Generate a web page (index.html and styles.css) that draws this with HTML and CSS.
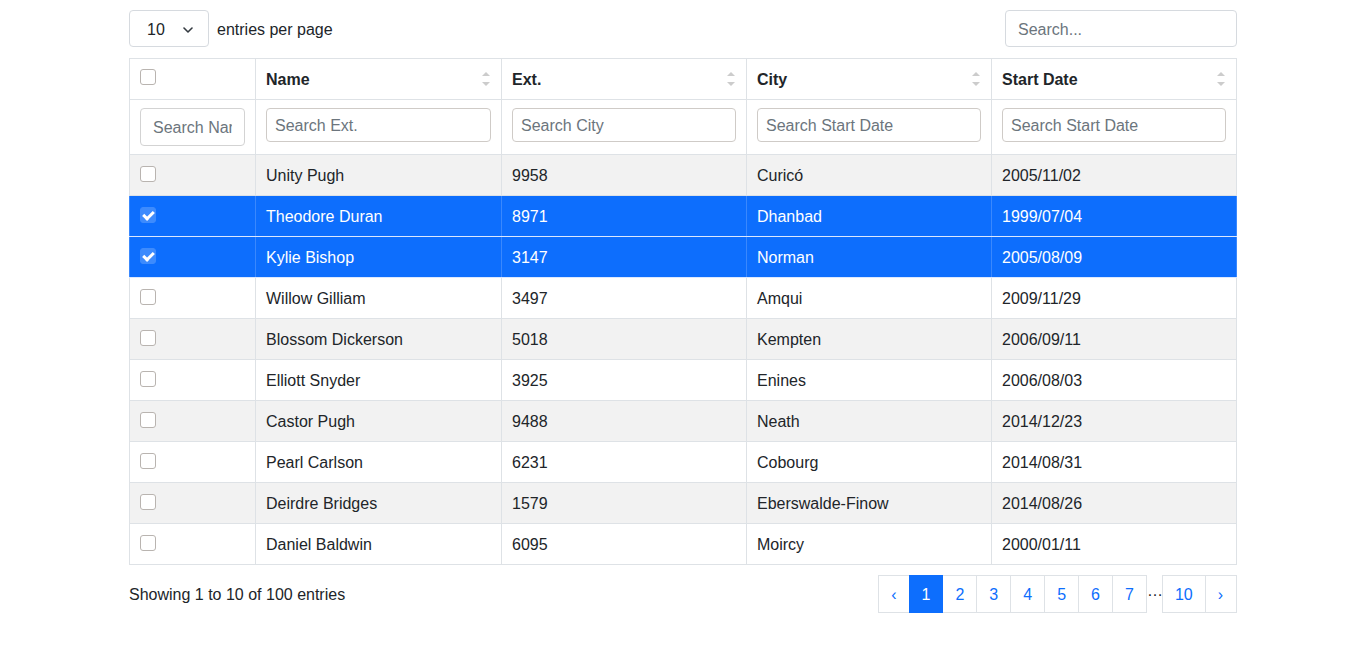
FILE: index.html
```html
<!DOCTYPE html>
<html>
<head>
<meta charset="utf-8">
<link rel="stylesheet" href="styles.css">
</head>
<body>
<div class="wrap">
  <div class="top">
    <div class="per">
      <div class="sel">
        <select class="selbox"><option>10</option></select>
        <svg class="chev" width="10" height="6" viewBox="0 0 10 6"><path d="M1 1l4 4 4-4" fill="none" stroke="#343a40" stroke-width="1.6" stroke-linecap="round" stroke-linejoin="round"/></svg>
      </div>
      <span class="perlabel">entries per page</span>
    </div>
    <input class="search" placeholder="Search...">
  </div>
  <table class="dt">
    <colgroup><col class="c0"><col class="c1"><col class="c2"><col class="c3"><col class="c4"></colgroup>
    <thead>
      <tr class="head">
        <th><input type="checkbox" class="cb"></th>
        <th><div class="th"><span>Name</span><svg class="sort" width="8" height="16" viewBox="0 0 8 16"><path d="M0 5L4 1L8 5Z M0 11L4 15L8 11Z" fill="#ccc"/></svg></div></th>
        <th><div class="th"><span>Ext.</span><svg class="sort" width="8" height="16" viewBox="0 0 8 16"><path d="M0 5L4 1L8 5Z M0 11L4 15L8 11Z" fill="#ccc"/></svg></div></th>
        <th><div class="th"><span>City</span><svg class="sort" width="8" height="16" viewBox="0 0 8 16"><path d="M0 5L4 1L8 5Z M0 11L4 15L8 11Z" fill="#ccc"/></svg></div></th>
        <th><div class="th"><span>Start Date</span><svg class="sort" width="8" height="16" viewBox="0 0 8 16"><path d="M0 5L4 1L8 5Z M0 11L4 15L8 11Z" fill="#ccc"/></svg></div></th>
      </tr>
      <tr class="filter">
        <th><input class="fbig" placeholder="Search Name"></th>
        <th><input class="f" placeholder="Search Ext."></th>
        <th><input class="f" placeholder="Search City"></th>
        <th><input class="f" placeholder="Search Start Date"></th>
        <th><input class="f" placeholder="Search Start Date"></th>
      </tr>
    </thead>
    <tbody>
      <tr class="odd"><td><input type="checkbox" class="cb"></td><td>Unity Pugh</td><td>9958</td><td>Curicó</td><td>2005/11/02</td></tr>
      <tr class="sel-row"><td><input type="checkbox" class="cb" checked></td><td>Theodore Duran</td><td>8971</td><td>Dhanbad</td><td>1999/07/04</td></tr>
      <tr class="sel-row"><td><input type="checkbox" class="cb" checked></td><td>Kylie Bishop</td><td>3147</td><td>Norman</td><td>2005/08/09</td></tr>
      <tr><td><input type="checkbox" class="cb"></td><td>Willow Gilliam</td><td>3497</td><td>Amqui</td><td>2009/11/29</td></tr>
      <tr class="odd"><td><input type="checkbox" class="cb"></td><td>Blossom Dickerson</td><td>5018</td><td>Kempten</td><td>2006/09/11</td></tr>
      <tr><td><input type="checkbox" class="cb"></td><td>Elliott Snyder</td><td>3925</td><td>Enines</td><td>2006/08/03</td></tr>
      <tr class="odd"><td><input type="checkbox" class="cb"></td><td>Castor Pugh</td><td>9488</td><td>Neath</td><td>2014/12/23</td></tr>
      <tr><td><input type="checkbox" class="cb"></td><td>Pearl Carlson</td><td>6231</td><td>Cobourg</td><td>2014/08/31</td></tr>
      <tr class="odd"><td><input type="checkbox" class="cb"></td><td>Deirdre Bridges</td><td>1579</td><td>Eberswalde-Finow</td><td>2014/08/26</td></tr>
      <tr><td><input type="checkbox" class="cb"></td><td>Daniel Baldwin</td><td>6095</td><td>Moircy</td><td>2000/01/11</td></tr>
    </tbody>
  </table>
  <div class="bottom">
    <div class="info">Showing 1 to 10 of 100 entries</div>
    <nav class="pager">
      <a class="pg">‹</a>
      <a class="pg active">1</a>
      <a class="pg">2</a>
      <a class="pg">3</a>
      <a class="pg">4</a>
      <a class="pg">5</a>
      <a class="pg">6</a>
      <a class="pg">7</a>
      <span class="ell">…</span>
      <a class="pg">10</a>
      <a class="pg last">›</a>
    </nav>
  </div>
</div>
</body>
</html>
```
FILE: styles.css
```css
* { box-sizing: border-box; }
html, body { margin: 0; padding: 0; background: #fff; }
body {
  font-family: "Liberation Sans", Arial, sans-serif;
  font-size: 16px;
  line-height: 24px;
  color: #212529;
}
.wrap {
  width: 1108px;
  margin: 0 auto;
  padding-top: 10px;
}
.top {
  display: flex;
  justify-content: space-between;
  align-items: center;
  height: 37px;
  margin-bottom: 11px;
}
.per { display: flex; align-items: center; gap: 8px; }
.perlabel { padding-top: 2px; }
.sel { position: relative; width: 80px; height: 37px; }
.selbox {
  appearance: none;
  -webkit-appearance: none;
  width: 80px;
  height: 37px;
  border: 1px solid #d6dadf;
  border-radius: 4px;
  background: #fff;
  font-family: inherit;
  font-size: 16px;
  color: #212529;
  padding: 2px 0 0 17px;
}
.chev { position: absolute; left: 54px; top: 17px; pointer-events: none; }
.search {
  width: 232px;
  height: 37px;
  border: 1px solid #d6dadf;
  border-radius: 4px;
  padding: 2px 12px 0;
  font-family: inherit;
  font-size: 16px;
  color: #212529;
}
.search::placeholder, .f::placeholder, .fbig::placeholder { color: #6c757d; }

.dt {
  width: 1108px;
  border-collapse: collapse;
  table-layout: fixed;
}
.c0 { width: 126px; }
.c1 { width: 246px; }
.c2 { width: 245px; }
.c3 { width: 245px; }
.c4 { width: 245px; }
.dt th, .dt td {
  border: 1px solid #dee2e6;
  padding: 9px 10px 7px;
  text-align: left;
  vertical-align: top;
  height: 41px;
}
.dt th { font-weight: bold; }
.th { display: flex; justify-content: space-between; align-items: center; height: 24px; }
.sort { margin-right: 1px; margin-top: -2px; }
.filter th { padding: 8px 10px; height: 55px; }
.fbig {
  display: block;
  width: 100%;
  height: 38px;
  border: 1px solid #d3d3d3;
  border-radius: 4px;
  padding: 2px 12px 0;
  font-family: inherit;
  font-size: 16px;
  color: #212529;
}
.f {
  display: block;
  width: 100%;
  height: 34px;
  border: 1px solid #cfcbc7;
  border-radius: 4px;
  padding: 2px 8px 0;
  font-family: inherit;
  font-size: 16px;
  font-weight: normal;
  color: #212529;
}
.cb {
  appearance: none;
  -webkit-appearance: none;
  display: block;
  width: 16px;
  height: 16px;
  margin: 2px 0 0 0;
  border: 1px solid #b9b4b0;
  border-radius: 3px;
  background: #fff;
  position: relative;
}
.head .cb { margin-top: 1px; }
.cb:checked {
  background: #3d8bfd;
  border-color: #3d8bfd;
}
.cb:checked::after {
  content: "";
  position: absolute;
  left: 4px;
  top: 1px;
  width: 4px;
  height: 8px;
  border: solid #fff;
  border-width: 0 3px 3px 0;
  transform: rotate(45deg);
}
tr.odd td { background: #f2f2f2; }
tr.sel-row td {
  background: #0d6efd;
  color: #fff;
  border-left-color: #3a88fd;
  border-right-color: #3a88fd;
  border-bottom-color: #dbe8ff;
}
.bottom {
  display: flex;
  justify-content: space-between;
  align-items: center;
  margin-top: 10px;
}
.info { padding-top: 1px; }
.pager { display: flex; align-items: flex-start; }
.pg {
  display: block;
  height: 38px;
  line-height: 35px;
  padding: 1px 12px 0;
  border: 1px solid #dee2e6;
  color: #0d6efd;
  background: #fff;
  margin-left: -1px;
  text-decoration: none;
  cursor: pointer;
}
.pg.last { padding-right: 13px; }
.pg:first-child { margin-left: 0; }
.pg.active { background: #0d6efd; border-color: #0d6efd; color: #fff; position: relative; }
.ell { display: block; line-height: 32px; width: 16px; color: #212529; margin-left: 0; }
.ell + .pg { margin-left: -1px; }
```
